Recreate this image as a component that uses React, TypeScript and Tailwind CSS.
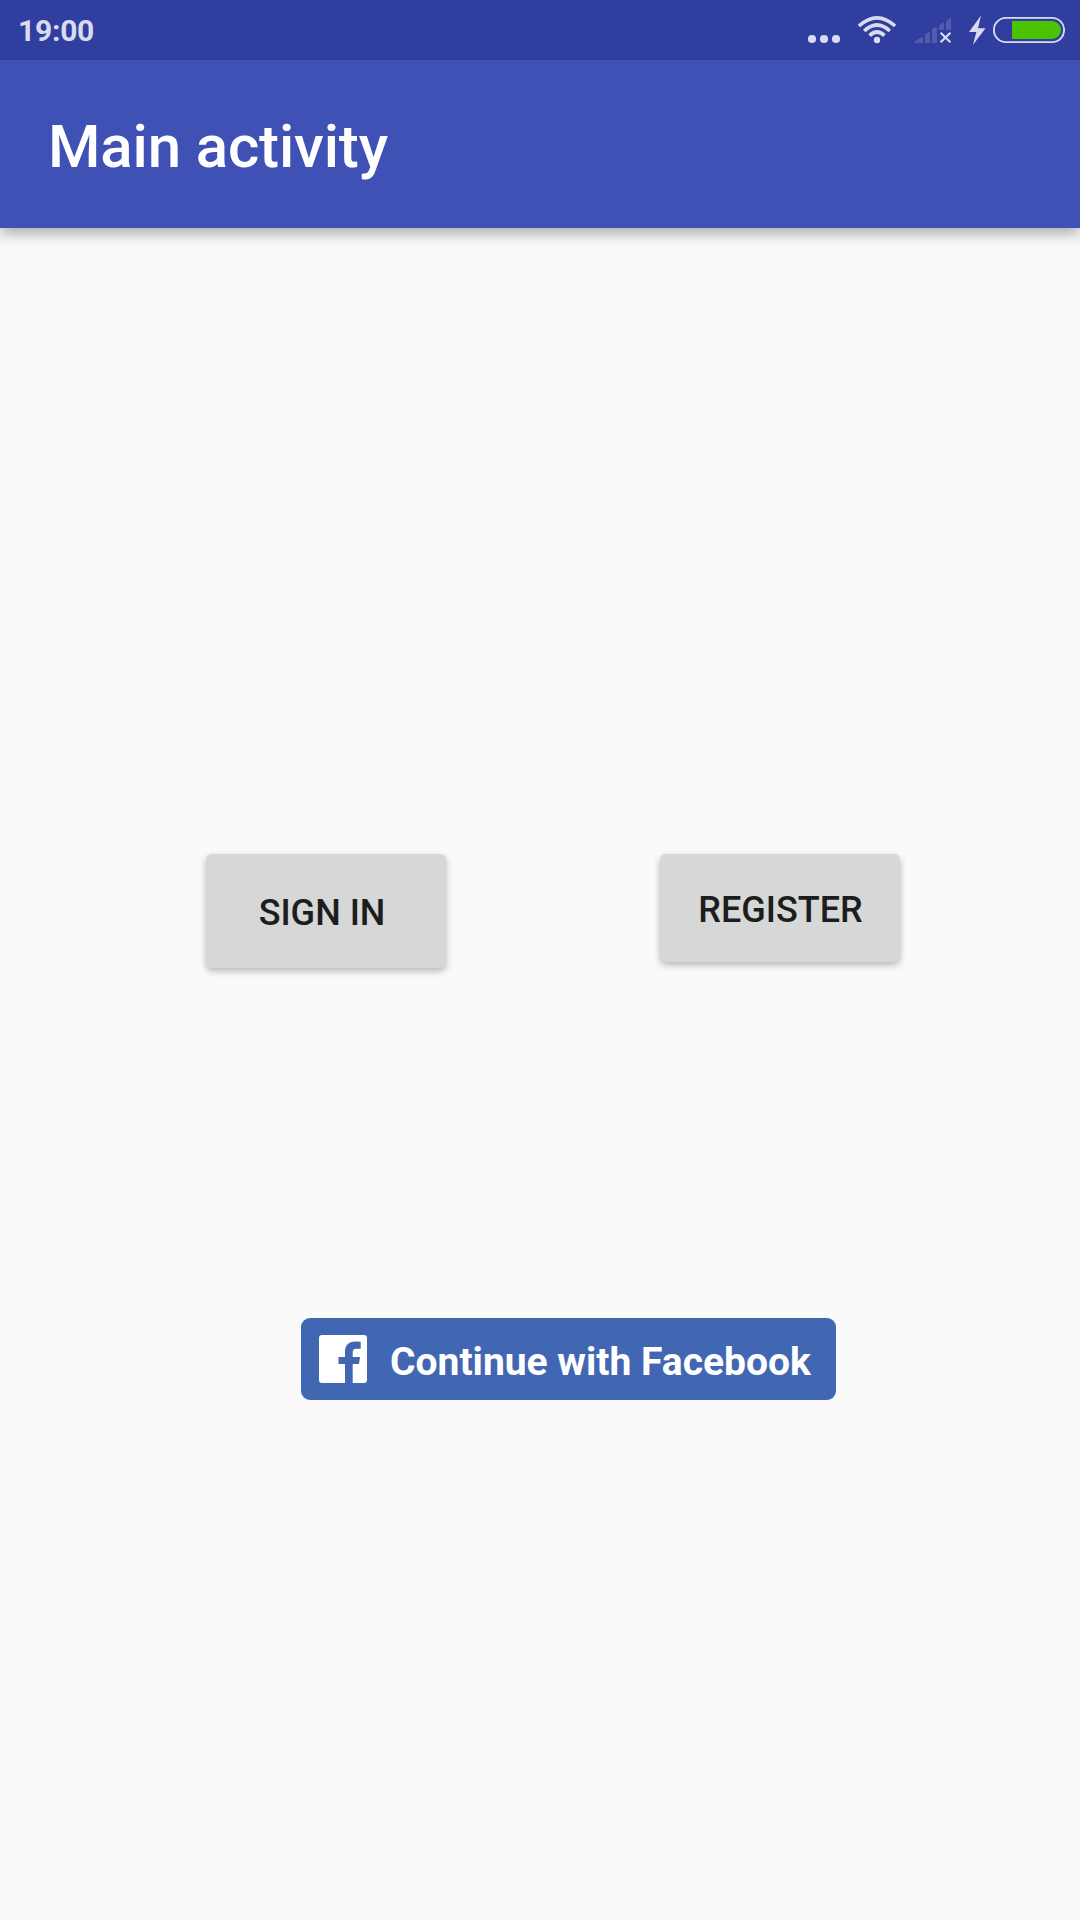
function StatusIcons() {
  return (
    <div className="flex h-[60px] items-center">
      <svg width="140" height="60" viewBox="808 0 140 60" className="overflow-visible">
        <g fill="#d9dbee">
          <circle cx="812" cy="39" r="4.1" />
          <circle cx="824" cy="39" r="4.1" />
          <circle cx="836" cy="39" r="4.1" />
          <circle cx="877" cy="40" r="3.2" />
        </g>
        <g fill="none" stroke="#d9dbee" strokeWidth="3.6">
          <path d="M858.9 26 Q877 9.6 895.1 26" />
          <path d="M864.2 31 Q877 19 889.8 31" />
          <path d="M869.6 35.6 Q877 28.4 884.4 35.6" />
        </g>
        <g fill="#515cad">
          <path d="M914 43 V42 L922 37 H923 V43 Z" />
          <path d="M925 43 V34.5 L929 32 H930 V43 Z" />
          <path d="M932 43 V29 L936 27 H937 V43 Z" />
          <path d="M939 30 V25.5 L943 23 H944 V30 Z" />
          <path d="M946 30 V21 L950 18 H951 V30 Z" />
        </g>
        <path d="M940.6 32.8 L950.4 42.2 M950.4 32.8 L940.6 42.2" stroke="#d9dbee" strokeWidth="2.2" />
      </svg>
      <svg width="117" height="60" viewBox="948 0 117 60">
        <path d="M981 15.5 L969 32 H976.4 L973 44.8 L985.5 28.2 H978 Z" fill="#d9dbee" />
        <rect x="993.9" y="17.9" width="70.2" height="24.2" rx="12.1" fill="none" stroke="#d9dbee" strokeWidth="1.9" />
        <path d="M1012 21 H1052 A9 9 0 0 1 1052 39 H1012 Z" fill="#4ac400" />
      </svg>
    </div>
  );
}

function FacebookMark() {
  return (
    <svg width="48" height="48" viewBox="0 0 48 48" className="shrink-0">
      <path
        fill="#fff"
        d="M3 0 H45 A3 3 0 0 1 48 3 V45 A3 3 0 0 1 45 48 H33.7 V29 H40 L41 22 H33.7 V17.5 C33.7 15 34.6 13.8 37.4 13.8 H41.7 V7 C41 6.8 39 6.5 36 6.5 C30 6.5 26 10.2 26 16.6 V22 H19.5 V29 H26 V48 H3 A3 3 0 0 1 0 45 V3 A3 3 0 0 1 3 0 Z"
      />
    </svg>
  );
}

export default function App() {
  return (
    <div className="flex h-[1920px] w-[1080px] flex-col overflow-hidden bg-[#fafafa] font-['Roboto',sans-serif]">
      <header className="shadow-[0_5px_14px_rgba(0,0,0,0.34)]">
        <div className="flex h-[60px] items-center justify-between bg-[#303f9f] pr-[15px] pl-[18px]">
          <span className="pt-0.5 text-[30px] leading-[58px] font-bold tracking-[-0.25px] text-[#d9dbee]">19:00</span>
          <StatusIcons />
        </div>
        <div className="flex h-[168px] items-center bg-[#3f51b5] pl-12">
          <h1 className="pt-[5px] text-[60px] leading-none font-medium tracking-[-0.14px] text-white">
            Main activity
          </h1>
        </div>
      </header>

      <main className="flex flex-col">
        <div className="mt-[626px] flex h-[114px] items-start gap-[214px] pl-[206px]">
          <button className="h-[114px] w-60 rounded-md bg-[#d6d8d7] pt-1 pr-[8px] text-[36px] leading-none font-medium text-[#1d1d1d] shadow-[0_3px_7px_rgba(0,0,0,0.28)]">
            SIGN IN
          </button>
          <button className="h-[108px] w-60 rounded-md bg-[#d6d8d7] pt-1 pl-px text-[36px] leading-none font-medium text-[#1d1d1d] shadow-[0_3px_7px_rgba(0,0,0,0.28)]">
            REGISTER
          </button>
        </div>
        <button className="mt-[350px] ml-[301px] flex h-[82px] w-[535px] items-center rounded-[9px] bg-[#4267b2] pl-[18px]">
          <FacebookMark />
          <span className="ml-[23px] pt-[6px] text-[39px] leading-none font-bold whitespace-nowrap text-white">
            Continue with Facebook
          </span>
        </button>
      </main>
    </div>
  );
}
